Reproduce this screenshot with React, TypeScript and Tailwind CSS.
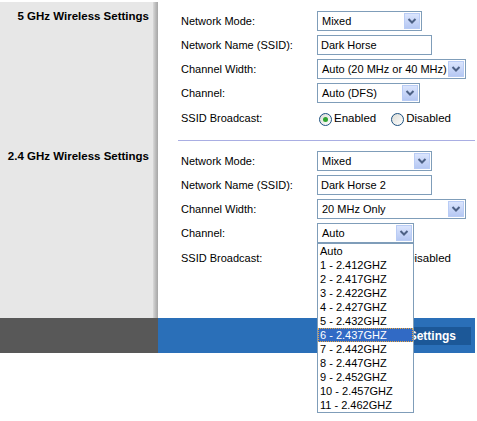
import { ReactNode } from "react";

const font = { fontFamily: '"Liberation Sans", Arial, sans-serif' };

const channels = [
  "Auto",
  "1 - 2.412GHZ",
  "2 - 2.417GHZ",
  "3 - 2.422GHZ",
  "4 - 2.427GHZ",
  "5 - 2.432GHZ",
  "6 - 2.437GHZ",
  "7 - 2.442GHZ",
  "8 - 2.447GHZ",
  "9 - 2.452GHZ",
  "10 - 2.457GHZ",
  "11 - 2.462GHZ",
];

const Arrow = () => (
  <span className="flex shrink-0 items-center justify-center w-[16px] h-[16px] mr-[1px] border border-[#b9ccf5] bg-linear-to-b from-[#dbe5fd] to-[#b6c8f3]">
    <svg width="10" height="8" viewBox="0 0 10 8">
      <path d="M1.5 2 L5 5.5 L8.5 2" fill="none" stroke="#4d6185" strokeWidth="2" />
    </svg>
  </span>
);

const Select = ({ value, className, children }: { value: string; className: string; children?: ReactNode }) => (
  <div className={`relative flex items-center justify-between h-[20px] border border-[#7f9db9] bg-white ${className}`}>
    <span className="pl-[4px] whitespace-nowrap text-[11px] leading-none text-black">{value}</span>
    <Arrow />
    {children}
  </div>
);

const Input = ({ value }: { value: string }) => (
  <div className="flex items-center w-[115px] h-[20px] border border-[#7f9db9] bg-white pl-[3px] whitespace-nowrap text-[11px] leading-none text-black">
    {value}
  </div>
);

const Radio = ({ checked, label }: { checked?: boolean; label: string }) => (
  <span className="flex items-center gap-[2px]">
    <span className="flex items-center justify-center w-[13px] h-[13px] rounded-full border border-[#1c5180] bg-linear-to-br from-[#dcdcd6] to-white">
      {checked && <span className="w-[5px] h-[5px] rounded-full bg-[#2fa52f]" />}
    </span>
    <span className="text-[11.5px] leading-none text-black">{label}</span>
  </span>
);

const Row = ({ label, tall, children }: { label: string; tall?: boolean; children: ReactNode }) => (
  <div className={`flex items-center ${tall ? "h-[26px]" : "h-[24px]"}`}>
    <span className="w-[136px] whitespace-nowrap text-[11px] text-black">{label}</span>
    {children}
  </div>
);

const ChannelList = () => (
  <div className="absolute left-[-1px] top-[19px] z-10 w-[97px] border border-[#7f9db9] bg-white">
    {channels.map((c) => (
      <div
        key={c}
        className={`h-[14px] pl-[2px] text-[11px] leading-[14px] ${
          c.startsWith("6 ") ? "bg-[#316ac5] text-white outline-1 outline-dotted outline-[#e8a640] -outline-offset-1" : "text-black"
        }`}
      >
        {c}
      </div>
    ))}
  </div>
);

const SideCell = ({ title, top }: { title: string; top: string }) => (
  <div className="flex w-[158px] shrink-0">
    <div className={`w-[153px] bg-[#e7e7e7] pr-[4px] text-right ${top}`}>
      <h2 className="whitespace-nowrap text-[11.5px] leading-[14px] font-bold text-black">{title}</h2>
    </div>
    <div className="w-[5px] bg-linear-to-r from-[#d9d9d9] via-[#bdbdbd] to-[#a6a6a6]" />
  </div>
);

export default function App() {
  return (
    <div className="w-[475px] h-[421px] bg-white pt-[2px]" style={font}>
      <section className="flex">
        <SideCell title="5 GHz Wireless Settings" top="pt-[7px]" />
        <div className="flex-1 pt-[7px]">
          <div className="pl-[23px]">
            <Row label="Network Mode:">
              <Select value="Mixed" className="w-[105px]" />
            </Row>
            <Row label="Network Name (SSID):">
              <Input value="Dark Horse" />
            </Row>
            <Row label="Channel Width:">
              <Select value="Auto (20 MHz or 40 MHz)" className="w-[149px]" />
            </Row>
            <Row label="Channel:">
              <Select value="Auto (DFS)" className="w-[103px]" />
            </Row>
            <Row label="SSID Broadcast:" tall>
              <div className="flex items-center gap-[15px] pl-[2px] pt-[2px]">
                <Radio checked label="Enabled" />
                <Radio label="Disabled" />
              </div>
            </Row>
          </div>
          <div className="mt-[9px] ml-[20px] border-b border-[#a9aee3]" />
        </div>
      </section>

      <section className="flex h-[177px]">
        <SideCell title="2.4 GHz Wireless Settings" top="pt-[8px]" />
        <div className="flex-1 pt-[8px] pl-[23px]">
          <Row label="Network Mode:">
            <Select value="Mixed" className="w-[115px]" />
          </Row>
          <Row label="Network Name (SSID):">
            <Input value="Dark Horse 2" />
          </Row>
          <Row label="Channel Width:">
            <Select value="20 MHz Only" className="w-[149px]" />
          </Row>
          <Row label="Channel:">
            <Select value="Auto" className="w-[97px]">
              <ChannelList />
            </Select>
          </Row>
          <Row label="SSID Broadcast:" tall>
            <div className="flex items-center gap-[15px] pl-[2px] pt-[2px]">
              <Radio checked label="Enabled" />
              <Radio label="Disabled" />
            </div>
          </Row>
        </div>
      </section>

      <footer className="flex h-[35px]">
        <div className="w-[158px] bg-[#585858]" />
        <div className="flex flex-1 items-center justify-end bg-[#2a6fb8] pr-[4px]">
          <button className="h-[18px] px-[15px] bg-[#1c5898] text-[12px] font-bold leading-none text-white">
            Save Settings
          </button>
        </div>
      </footer>
    </div>
  );
}
